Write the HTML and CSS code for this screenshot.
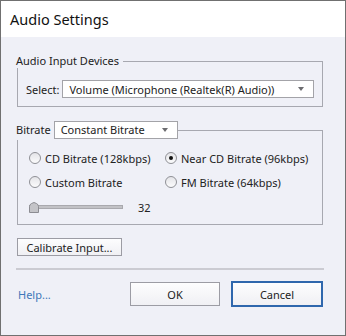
FILE: index.html
```html
<!DOCTYPE html>
<html>
<head>
<meta charset="utf-8" />
<title>Audio Settings</title>
<link rel="stylesheet" href="styles.css">
</head>
<body>
<div class="window">
	<div class="titlebar">Audio Settings</div>
	<div class="content">
		<div class="group">
			<div class="group-head">
				<span class="group-label">Audio Input Devices</span>
				<span class="group-line"></span>
			</div>
			<div class="group-body select-row">
				<span class="select-label">Select:</span>
				<div class="dropdown device">
					<span class="dropdown-text">Volume (Microphone (Realtek(R) Audio))</span>
					<span class="arrow"></span>
				</div>
			</div>
		</div>

		<div class="group bitrate">
			<div class="group-head">
				<span class="group-label">Bitrate</span>
				<div class="dropdown mode">
					<span class="dropdown-text">Constant Bitrate</span>
					<span class="arrow"></span>
				</div>
				<span class="group-line"></span>
			</div>
			<div class="group-body">
				<div class="radios">
					<div class="radio-item"><span class="radio"></span>CD Bitrate (128kbps)</div>
					<div class="radio-item"><span class="radio checked"></span>Near CD Bitrate (96kbps)</div>
					<div class="radio-item"><span class="radio"></span>Custom Bitrate</div>
					<div class="radio-item"><span class="radio"></span>FM Bitrate (64kbps)</div>
				</div>
				<div class="slider-row">
					<div class="slider">
						<div class="track"></div>
						<svg class="thumb" width="10" height="11" viewBox="0 0 10 11">
							<path d="M0.5 10.5 V4.5 Q0.5 2.5 2.5 1.5 L5 0.5 L7.5 1.5 Q9.5 2.5 9.5 4.5 V10.5 Z" fill="#c4c4c8" stroke="#8c8c92" stroke-width="1"/>
						</svg>
					</div>
					<span class="slider-value">32</span>
				</div>
			</div>
		</div>

		<div class="btn calibrate">Calibrate Input...</div>
		<div class="separator"></div>

		<div class="footer">
			<span class="help">Help...</span>
			<div class="btn ok">OK</div>
			<div class="btn cancel">Cancel</div>
		</div>
	</div>
</div>
</body>
</html>
```

FILE: styles.css
```css
*{
	box-sizing: border-box;
}

body{
	margin: 0;
	font-family: "Noto Sans", sans-serif;
	font-size: 11px;
	color: #222222;
}

.window{
	width: 346px;
	height: 336px;
	border: 1px solid #707070;
	background-color: #eff0f7;
}

.titlebar{
	height: 36px;
	background-color: #ffffff;
	padding-left: 9px;
	line-height: 36px;
	font-size: 14.5px;
	color: #111111;
}

.content{
	padding: 17px 22px 0 16px;
}

.group-head{
	display: flex;
	height: 14px;
	line-height: 14px;
}

.group-label{
	margin-left: -1px;
	padding-right: 4px;
	white-space: nowrap;
}

.group-line{
	flex: 1;
	margin-top: 7px;
	height: 7px;
	border-top: 1px solid #a7a8b0;
	border-right: 1px solid #a7a8b0;
}

.group-body{
	border: 1px solid #a7a8b0;
	border-top: none;
}

.select-row{
	display: flex;
	align-items: center;
	gap: 3px;
	padding: 12px 8px 8px 8px;
}

.dropdown{
	display: flex;
	align-items: center;
	height: 18px;
	background-color: #ffffff;
	border: 1px solid #a3a3a8;
	padding: 0 6px;
}

.dropdown-text{
	flex: 1;
	white-space: nowrap;
}

.device{
	flex: 1;
}

.arrow{
	width: 0;
	height: 0;
	border-left: 3px solid transparent;
	border-right: 3px solid transparent;
	border-top: 4px solid #6c6c70;
	margin-right: 3px;
}

.bitrate{
	margin-top: 14px;
}

.bitrate .group-head{
	height: 19px;
	line-height: 16px;
}

.bitrate .group-label{
	padding-top: 1px;
	padding-right: 3px;
}

.mode{
	width: 124px;
}

.bitrate .group-line{
	margin-top: 9px;
	height: 10px;
}

.bitrate .group-body{
	padding: 12px 8px 10px 11px;
}

.radios{
	display: grid;
	grid-template-columns: 136px auto;
	row-gap: 12px;
}

.radio-item{
	display: flex;
	align-items: center;
	gap: 4px;
	height: 12px;
	white-space: nowrap;
}

.radio{
	width: 12px;
	height: 12px;
	border-radius: 50%;
	border: 1px solid #8f9096;
	background: linear-gradient(#e4e4e8, #fbfbfc);
	display: flex;
	align-items: center;
	justify-content: center;
}

.radio.checked::after{
	content: "";
	width: 4px;
	height: 4px;
	border-radius: 50%;
	background-color: #111111;
}

.slider-row{
	display: flex;
	align-items: center;
	margin-top: 12px;
	height: 14px;
}

.slider{
	position: relative;
	width: 94px;
	height: 14px;
}

.track{
	margin-top: 5px;
	height: 4px;
	background-color: #c2c2c6;
	border: 1px solid #a9a9ae;
}

.thumb{
	position: absolute;
	left: 0;
	top: 2px;
}

.slider-value{
	margin-left: 15px;
}

.btn{
	display: flex;
	align-items: center;
	justify-content: center;
	background: linear-gradient(#fdfdfe, #f0f0f4);
	border: 1px solid #9c9ca4;
	white-space: nowrap;
}

.calibrate{
	margin-top: 13px;
	width: 105px;
	height: 18px;
}

.separator{
	margin: 12px -1px 0 -1px;
	height: 2px;
	background-color: #cbcbd2;
}

.footer{
	display: flex;
	align-items: center;
	margin-top: 12px;
}

.help{
	flex: 1;
	padding-left: 1px;
	color: #3f78b9;
}

.ok{
	width: 90px;
	height: 24px;
}

.cancel{
	margin-left: 12px;
	margin-right: 1px;
	width: 90px;
	height: 24px;
	border-color: #2f67ad;
	box-shadow: 0 0 0 1px #2f67ad;
}
```
